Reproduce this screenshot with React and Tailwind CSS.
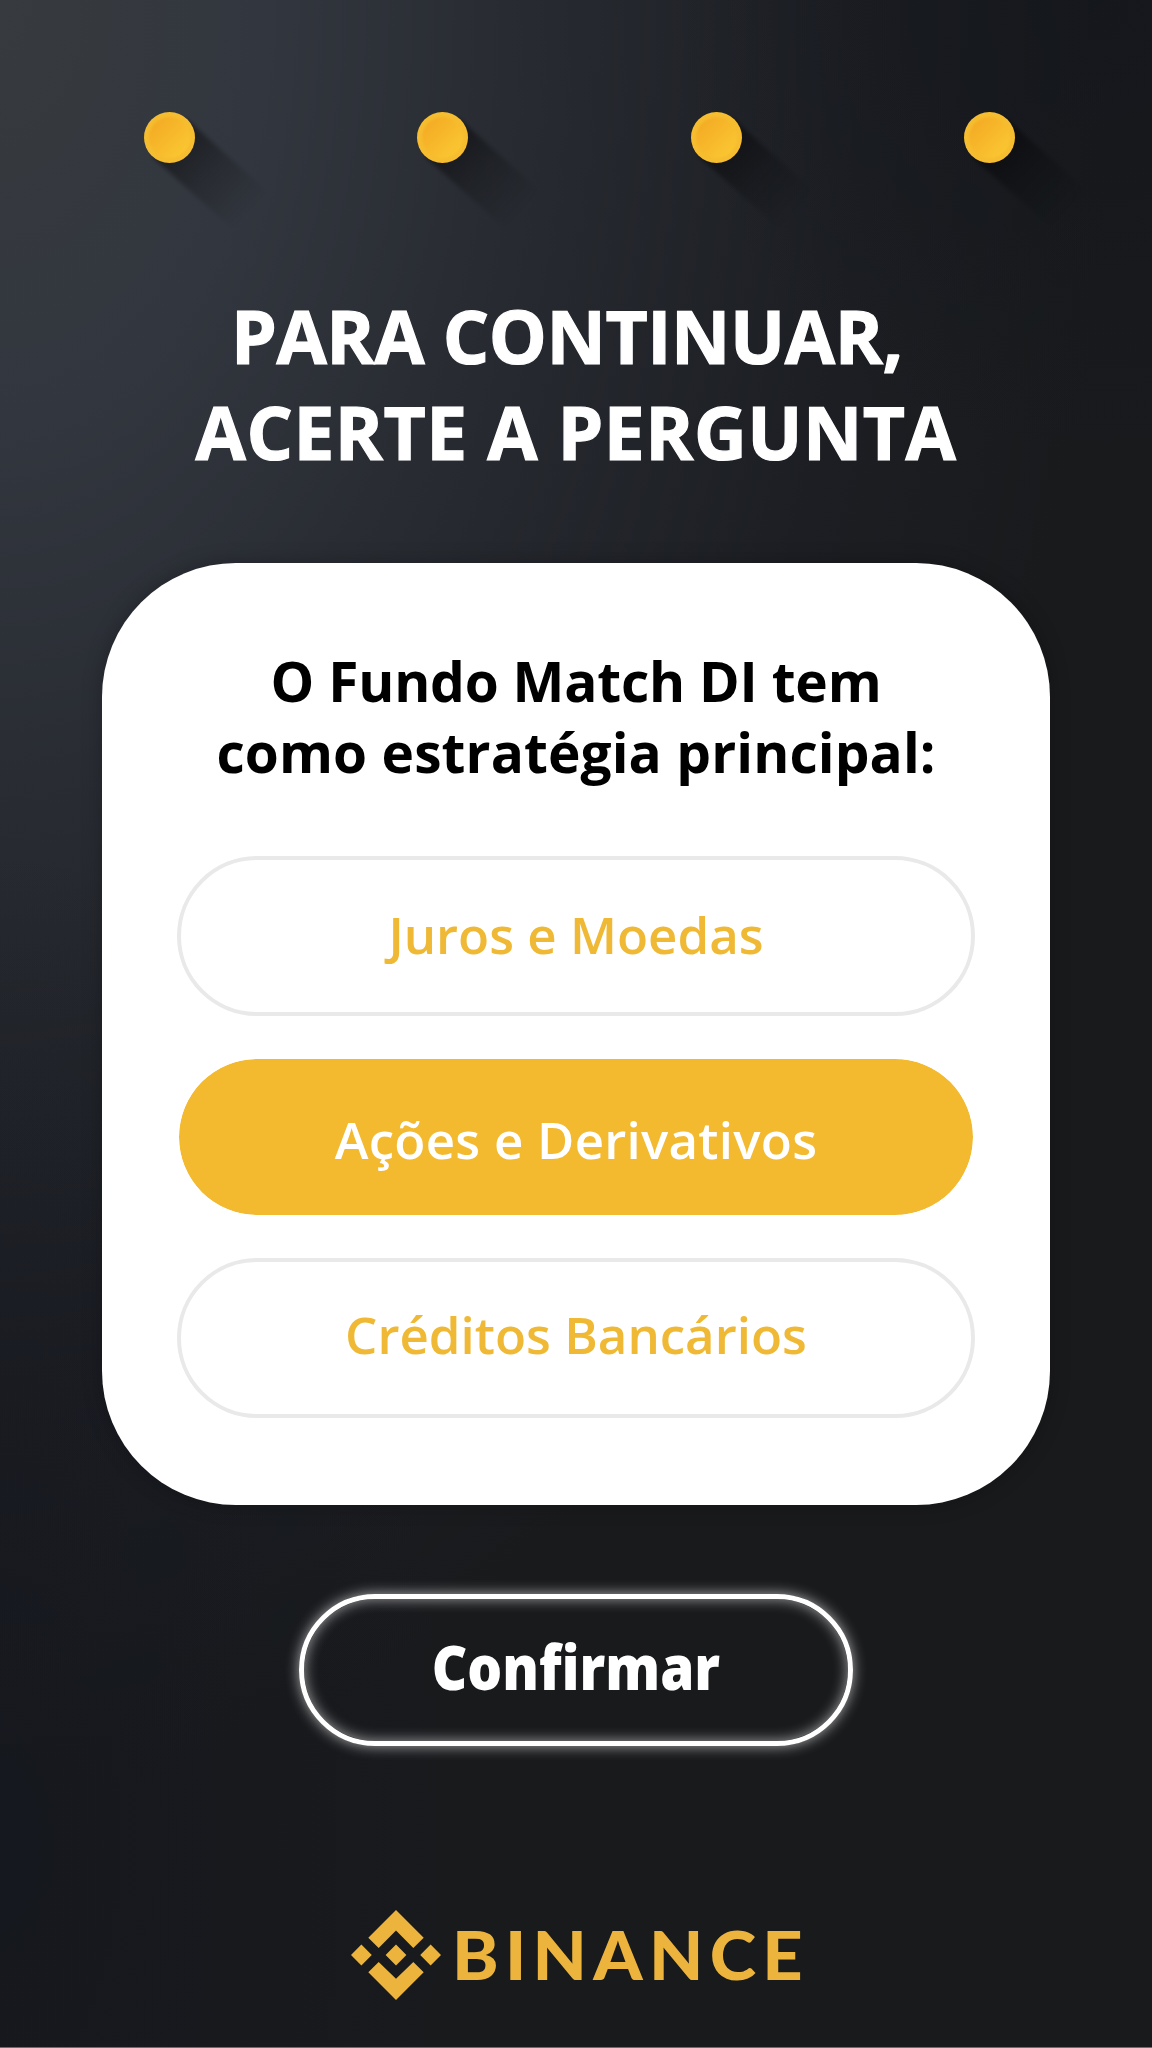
import React, { useState } from "react";

const steps = [1, 2, 3, 4];

const options = [
  { id: 1, label: "Juros e Moedas", text: "pb-[4px]" },
  { id: 2, label: "Ações e Derivativos", text: "pt-[4px] tracking-[0.25px]" },
  { id: 3, label: "Créditos Bancários", text: "pb-[7px]" },
];

const StepDot = () => (
  <div className="relative w-[51px] h-[51px]">
    {/* Long shadow */}
    <div className="absolute left-[25px] top-0 w-[112px] h-[51px] origin-[0_50%] rotate-[42deg] bg-linear-to-r from-black/50 via-black/20 to-transparent blur-[2px]" />
    <div className="absolute inset-0 rounded-full bg-[#f6bd30]" />
    <div className="absolute inset-[5px] rounded-full bg-linear-to-br from-[#f3a722] to-[#fbcb34] blur-[1px]" />
  </div>
);

const BinanceLogo = () => (
  <svg width="90" height="90" viewBox="0 0 91 91" fill="#ecb43c">
    <path d="M45.5 0 73.5 28 63 38.3 45.5 20.8 28 38.3 17.5 28z" />
    <path d="M45.5 91 73.5 63 63 52.7 45.5 69.5 28 52.7 17.5 63z" />
    <path d="M10.5 35 21 45.5 10.5 56 0 45.5zM45.5 35 56 45.5 45.5 56 35 45.5zM80.5 35 91 45.5 80.5 56 70 45.5z" />
  </svg>
);

const App = () => {
  const [selected, setSelected] = useState(2);

  return (
    <div className="w-[1152px] h-[2048px] overflow-hidden flex flex-col items-center border-b border-[#6b6c6e] bg-[#191a1c] bg-[radial-gradient(ellipse_460px_1000px_at_0_90%,rgba(20,23,31,0.7)_0%,rgba(20,23,31,0)_100%),radial-gradient(ellipse_420px_460px_at_95%_0,rgba(19,22,28,0.7)_0%,rgba(19,22,28,0)_100%),radial-gradient(ellipse_1060px_1700px_at_0_0,#373b3f_0%,#32363e_25%,#25282e_55%,#1c1e23_82%,#191a1c_105%)] font-['Open_Sans',sans-serif]">
      <div className="mt-[112px] ml-[7px] w-[872px] shrink-0 flex justify-between">
        {steps.map((step) => (
          <StepDot key={step} />
        ))}
      </div>

      <h1 className="mt-[125px] text-center text-white font-bold text-[73px] leading-[96px] whitespace-nowrap [-webkit-text-stroke:1.2px_white]">
        <div className="pr-[18px] tracking-[-0.4px]">PARA CONTINUAR,</div>
        <div className="tracking-[0.5px]">ACERTE A PERGUNTA</div>
      </h1>

      {/* Question Card */}
      <div className="mt-[83px] w-[948px] h-[942px] shrink-0 rounded-[134px] bg-white shadow-[0_0_20px_rgba(0,0,0,0.25)] flex flex-col items-center">
        <h2 className="mt-[82px] text-center text-black font-bold text-[55px] leading-[71px] whitespace-nowrap">
          <div className="tracking-[-0.2px]">O Fundo Match DI tem</div>
          <div className="tracking-[0.1px]">como estratégia principal:</div>
        </h2>
        <div className="mt-[69px] w-[798px] flex flex-col gap-[41px]">
          {options.map((option) => (
            <button
              key={option.id}
              onClick={() => setSelected(option.id)}
              className={`h-[160px] rounded-full font-semibold text-[51px] whitespace-nowrap ${option.text} ${
                selected === option.id
                  ? "border-2 border-white bg-clip-padding bg-[#f3b92f] text-white"
                  : "border-4 border-[#e9e9e9] bg-white text-[#efb935]"
              }`}
            >
              {option.label}
            </button>
          ))}
        </div>
      </div>

      <button className="mt-[89px] w-[554px] h-[152px] shrink-0 rounded-full border-[5px] border-white shadow-[0_0_14px_rgba(255,255,255,0.65),inset_0_0_14px_rgba(255,255,255,0.6)] text-white font-extrabold text-[62px] pb-[7px]">
        <span className="inline-block scale-x-[0.885]">Confirmar</span>
      </button>

      <div className="mt-[164px] w-[451px] shrink-0 flex items-center">
        <BinanceLogo />
        <span className="ml-[11px] -mt-[3px] inline-block origin-left scale-x-[1.05] font-['Lato',sans-serif] font-black text-[67px] leading-[90px] tracking-[6px] text-[#ecb43c]">
          BINANCE
        </span>
      </div>
    </div>
  );
};

export default App;
